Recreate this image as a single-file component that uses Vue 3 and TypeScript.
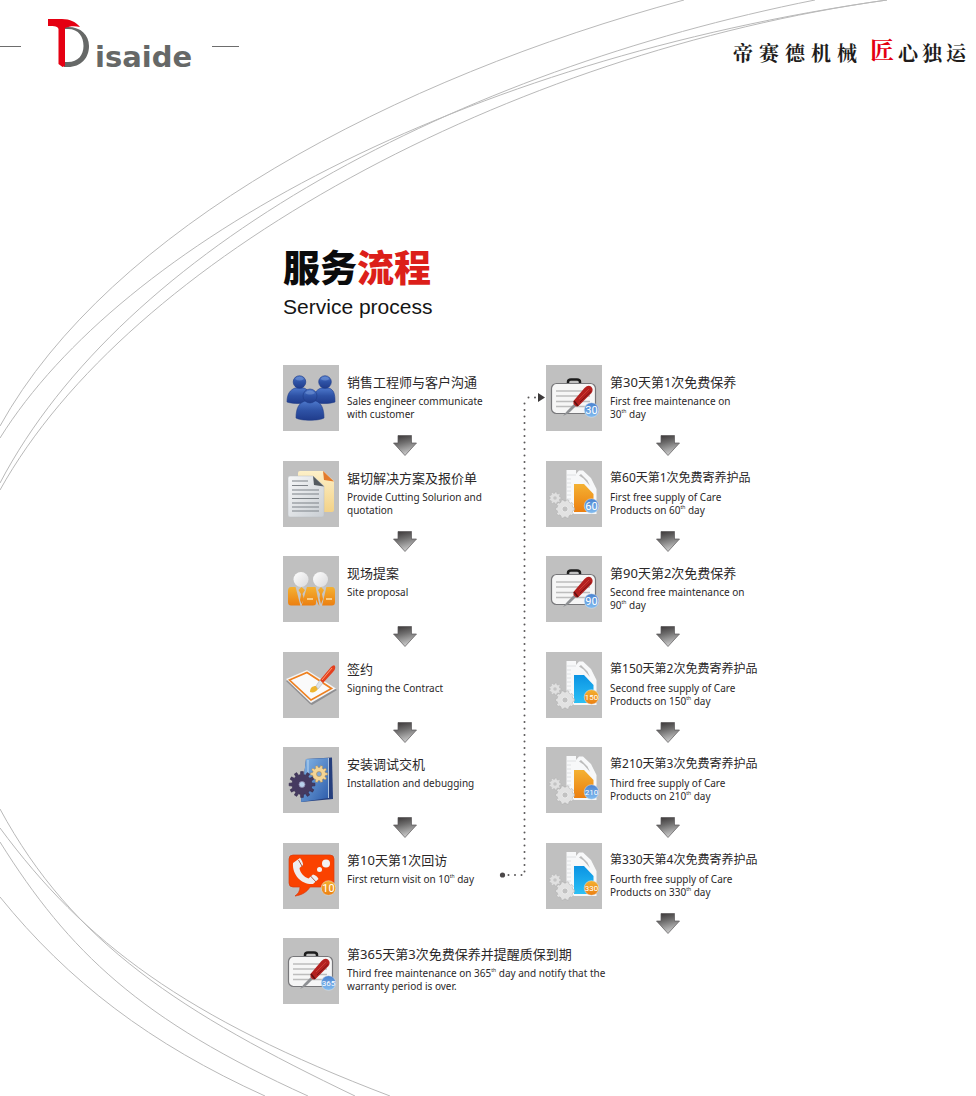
<script setup lang="ts">
type Icon = 'people' | 'papers' | 'team' | 'contract' | 'manual' | 'call' | 'case' | 'bottle'

interface Step {
  icon: Icon
  title: string
  // Each line is [text before the ordinal suffix, text after it]
  lines: [string, string?][]
  badge?: string
  tone?: 'blue' | 'orange'
  liquid?: 'orange' | 'cyan'
  compact?: boolean
}

const first: Step[] = [
  { icon: 'people', title: '销售工程师与客户沟通', lines: [['Sales engineer communicate'], ['with customer']] },
  { icon: 'papers', title: '锯切解决方案及报价单', lines: [['Provide Cutting Solurion and'], ['quotation']] },
  { icon: 'team', title: '现场提案', lines: [['Site proposal']] },
  { icon: 'contract', title: '签约', lines: [['Signing the Contract']] },
  { icon: 'manual', title: '安装调试交机', lines: [['Installation and debugging']] },
  { icon: 'call', title: '第10天第1次回访', lines: [['First return visit on 10', ' day']], badge: '10', tone: 'orange' },
]

const second: Step[] = [
  { icon: 'case', title: '第30天第1次免费保养', lines: [['First free maintenance on'], ['30', ' day']], badge: '30', tone: 'blue' },
  { icon: 'bottle', title: '第60天第1次免费寄养护品', lines: [['First free supply of Care'], ['Products on 60', ' day']], badge: '60', tone: 'blue', liquid: 'orange', compact: true },
  { icon: 'case', title: '第90天第2次免费保养', lines: [['Second free maintenance on'], ['90', ' day']], badge: '90', tone: 'blue' },
  { icon: 'bottle', title: '第150天第2次免费寄养护品', lines: [['Second free supply of Care'], ['Products on 150', ' day']], badge: '150', tone: 'orange', liquid: 'cyan', compact: true },
  { icon: 'bottle', title: '第210天第3次免费寄养护品', lines: [['Third free supply of Care'], ['Products on 210', ' day']], badge: '210', tone: 'blue', liquid: 'orange', compact: true },
  { icon: 'bottle', title: '第330天第4次免费寄养护品', lines: [['Fourth free supply of Care'], ['Products on 330', ' day']], badge: '330', tone: 'orange', liquid: 'cyan', compact: true },
]

const last: Step[] = [
  { icon: 'case', title: '第365天第3次免费保养并提醒质保到期', lines: [['Third free maintenance on 365', ' day and notify that the'], ['warranty period is over.']], badge: '365', tone: 'blue' },
]

const groups = [
  { name: 'first', steps: first },
  { name: 'second', steps: second },
  { name: 'last', steps: last },
]

// Sweeping background lines: upper set, then lower set
const arcs = [
  'M684 0C395 78 110 228 0 426',
  'M815 0C458 71 124 247 0 483',
  'M887 0C462 60 122 243 0 438',
  'M887 0C509 53 129 258 0 490',
  'M0 809C73 944 182 1013 355 1096',
  'M0 828C85 943 185 1018 390 1096',
  'M0 842C69 952 140 1020 308 1096',
  'M0 897C68 981 150 1044 265 1096',
]

function gear(cx: number, cy: number, outer: number, inner: number, teeth: number): string {
  const pts: string[] = []
  const step = (Math.PI * 2) / teeth
  for (let i = 0; i < teeth; i++) {
    const a = i * step
    const spots: [number, number][] = [[-0.3, inner], [-0.2, outer], [0.2, outer], [0.3, inner]]
    for (const [f, r] of spots) {
      pts.push(`${(cx + Math.cos(a + f * step) * r).toFixed(2)} ${(cy + Math.sin(a + f * step) * r).toFixed(2)}`)
    }
  }
  return `M${pts.join('L')}Z`
}

const slogan = [...'帝赛德机械']
const sloganEnd = [...'心独运']
</script>

<template>
  <div class="page">
    <svg class="arcs" width="976" height="1096" viewBox="0 0 976 1096" aria-hidden="true">
      <defs>
        <linearGradient id="g-arrow" x1="0" y1="0" x2="0.3" y2="1"><stop offset="0" stop-color="#353132" /><stop offset="0.45" stop-color="#6f6e6e" /><stop offset="1" stop-color="#c6c6c6" /></linearGradient>
        <linearGradient id="g-person" x1="0" y1="0" x2="0" y2="1"><stop offset="0" stop-color="#4d78cc" /><stop offset="0.5" stop-color="#2e52a5" /><stop offset="1" stop-color="#203c8c" /></linearGradient>
        <linearGradient id="g-orange" x1="0" y1="0" x2="0" y2="1"><stop offset="0" stop-color="#f4b132" /><stop offset="1" stop-color="#ec7f10" /></linearGradient>
        <linearGradient id="g-cyan" x1="0" y1="0" x2="0" y2="1"><stop offset="0" stop-color="#0a93e3" /><stop offset="1" stop-color="#2cc0f5" /></linearGradient>
        <linearGradient id="g-blue" x1="0" y1="0" x2="0" y2="1"><stop offset="0" stop-color="#4a82d0" /><stop offset="1" stop-color="#83bdf0" /></linearGradient>
        <linearGradient id="g-book" x1="0" y1="0" x2="1" y2="1"><stop offset="0" stop-color="#86b8e8" /><stop offset="1" stop-color="#2d5cab" /></linearGradient>
        <linearGradient id="g-paper" x1="0" y1="0" x2="1" y2="1"><stop offset="0" stop-color="#f6f7f8" /><stop offset="1" stop-color="#c9ced3" /></linearGradient>
        <linearGradient id="g-cream" x1="0" y1="0" x2="0" y2="1"><stop offset="0" stop-color="#fdf0c8" /><stop offset="1" stop-color="#f3d287" /></linearGradient>
        <linearGradient id="g-white" x1="0" y1="0" x2="1" y2="1"><stop offset="0" stop-color="#ffffff" /><stop offset="1" stop-color="#d9d9db" /></linearGradient>
      </defs>
      <path v-for="(d, i) in arcs" :key="i" :d="d" fill="none" stroke="#b9b9b9" stroke-width="1" />
    </svg>

    <header class="header">
      <div class="brand">
        <span class="dash dash-left"></span>
        <div class="logo">
          <svg width="41" height="48" viewBox="0 0 41 48" aria-hidden="true">
            <path d="M16 8H20C33 8 41 16 41 27C41 39 33 48 20 48H16V43H20C30 43 35.500 36 35.500 27C35.500 18 31 10 20 10H16Z" fill="#666867" />
            <path d="M0 0H14C22 0 28 3 32 8C27 7 22 7 17 9V47L14.500 48L10.500 45V10C10 7.500 7 7 0 7Z" fill="#e50012" />
          </svg>
          <span class="logo-text">isaide</span>
        </div>
        <span class="dash"></span>
      </div>
      <p class="slogan">
        <span class="slogan-part"><span v-for="c in slogan" :key="c">{{ c }}</span></span>
        <span class="slogan-part tight"><em>匠</em><span v-for="c in sloganEnd" :key="c">{{ c }}</span></span>
      </p>
    </header>

    <main class="content">
      <h1>服务<span>流程</span></h1>
      <p class="subtitle">Service process</p>

      <div class="flow">
        <ol v-for="group in groups" :key="group.name" :class="group.name">
          <li v-for="step in group.steps" :key="step.title">
            <div class="step">
              <svg class="tile" width="56" height="66" viewBox="0 0 56 66" aria-hidden="true">
                <g v-if="step.icon === 'people'" fill="url(#g-person)" stroke="#1f3b86" stroke-width="0.6">
                  <path d="M4 37C4 29 7 25 12 23H21C26 25 28 29 28 37C22 39 10 39 4 37Z" />
                  <circle cx="16.500" cy="17" r="6.300" />
                  <path d="M30 37C30 29 33 25 38 23H46C51 25 52 29 52 37C46 39 36 39 30 37Z" />
                  <circle cx="42" cy="17" r="6.300" />
                  <path d="M13 53C13 43 16 38 22 36H33C38 38 41 43 41 53C36 56 18 56 13 53Z" />
                  <circle cx="27" cy="31" r="7" />
                  <path d="M12 14C14 11 19 11 21 14C18 16 15 16 12 14ZM37.500 14C39.500 11 44.500 11 46.500 14C43.500 16 40.500 16 37.500 14ZM22 28C24 24.500 30 24.500 32 28C29 30 25 30 22 28Z" fill="#8eaee6" stroke="none" opacity="0.4" />
                </g>

                <g v-else-if="step.icon === 'papers'">
                  <path d="M17 10H40L51 20V49Q51 51 49 51H17Q15 51 15 49V12Q15 10 17 10Z" fill="url(#g-cream)" />
                  <path d="M40 10L51 20.500L41 19Z" fill="#e27a2b" />
                  <path d="M7 15H30L41 25V54Q41 56 39 56H7Q5 56 5 54V17Q5 15 7 15Z" fill="url(#g-paper)" stroke="#b9bec2" stroke-width="0.5" />
                  <path d="M30 15L41 25.500L31 24Z" fill="#555b60" />
                  <path d="M9 20H25M9 24.500H25M9 29H36M9 33H36M9 37.500H36M9 42H36M9 46H36M9 50H36" stroke="#7d8287" stroke-width="1.200" fill="none" />
                </g>

                <g v-else-if="step.icon === 'team'">
                  <path d="M8 31H14L18.500 49L23 31H30Q33 31 33 36V47Q33 49.500 30 49.500H8Q5 49.500 5 46V35Q5 31 8 31Z" fill="url(#g-orange)" />
                  <path d="M12.500 30.500H24L18.500 50H17.500Z" fill="#c6c6c6" />
                  <path d="M27 31L36 49.500H49Q52 49.500 52 46V35Q52 31 49 31H42L38 49L34 31Z" fill="url(#g-orange)" />
                  <path d="M32.500 30.500H43.500L39 50H36.500Z" fill="#c6c6c6" />
                  <path d="M15.500 34L18.500 31L22 34L19.500 38L21 43L18.500 48L17 44L18 38ZM35 34L38 31L41 34L39 38L40 43L38 48L36.500 42L37 38Z" fill="url(#g-orange)" />
                  <path d="M24 43H30M43 43H49" stroke="#ffe0a6" stroke-width="1.500" />
                  <circle cx="18" cy="23.500" r="7.500" fill="url(#g-white)" />
                  <circle cx="37.500" cy="23.500" r="7.500" fill="url(#g-white)" />
                </g>

                <g v-else-if="step.icon === 'contract'">
                  <path d="M3 29L24 20L54 38L29 53L27 52Z" fill="#8f8f92" />
                  <path d="M3 27L24 18L53 36.500L28 51Z" fill="#f4f4f4" />
                  <path d="M6.500 28L24 20.500L48.500 36.500L28 48Z" fill="#fafafa" stroke="#ee8020" stroke-width="1.700" />
                  <path d="M27 40C27 36 29 34 33 34L35 37C33 40 30 41 27 40Z" fill="#eeb52f" />
                  <path d="M33 34L37 28L40 31L35 37Z" fill="#dfe3e8" stroke="#a9adb2" stroke-width="0.500" />
                  <path d="M37 28L48 15Q51 12 52 14Q53 17 50 20L40 31Z" fill="#e4401f" />
                  <path d="M39 28L49 16" stroke="#ff9a70" stroke-width="1" />
                </g>

                <g v-else-if="step.icon === 'manual'">
                  <path d="M23 12L49 10.500L50 52L18 55Z" fill="#263f7d" />
                  <path d="M23 12L45 11V51L18 55Z" fill="url(#g-book)" />
                  <path d="M25 13V44M45.500 11V51" stroke="#d2e4f6" stroke-width="0.800" />
                  <path :d="gear(36, 27, 8.500, 6.500, 10)" fill="#f4d595" stroke="#b98f4c" stroke-width="0.500" />
                  <circle cx="36" cy="27" r="2.500" fill="#7ea9da" stroke="#b98f4c" stroke-width="0.600" />
                  <path :d="gear(19, 37.500, 13, 10, 12)" fill="#453a60" stroke="#2e2547" stroke-width="0.500" />
                  <circle cx="19" cy="37.500" r="3" fill="#b9d3ed" stroke="#8d84a8" stroke-width="0.800" />
                </g>

                <g v-else-if="step.icon === 'call'">
                  <path d="M10 12H47Q51 12 51 16V40Q51 44 47 44H27C24 49 19 52 12 53C15 51 17 48 17 44H10Q6 44 6 40V16Q6 12 10 12Z" fill="#fa4200" stroke="#d93a0c" stroke-width="0.700" />
                  <path d="M10 20L17 15C19 17 20 20 20 22L16.500 25C17 30 21 34 25.500 35.500L30 31.500C33 32 34.500 34 35.500 36L30 41C20 42 9 33 10 20Z" fill="#ededef" />
                  <path d="M15.500 17L19.500 24M27.500 33L33 39" stroke="#a95a45" stroke-width="1" />
                  <circle cx="43" cy="20.500" r="4" fill="#f3f3f3" />
                  <circle cx="36.500" cy="26.500" r="2.500" fill="#f3f3f3" />
                </g>

                <g v-else-if="step.icon === 'case'">
                  <path d="M22 18V17Q22 14.500 25 14.500H31Q34 14.500 34 17V18" fill="none" stroke="#1c1c1c" stroke-width="2.500" />
                  <rect x="5.500" y="18.500" width="44" height="30" rx="5" fill="#f6f6f6" stroke="#77777a" stroke-width="1.200" />
                  <path d="M10 26H40M10 31H44M10 36.500H44M10 41.500H44" stroke="#bdbdbd" stroke-width="1.300" />
                  <path d="M30 37L21 46L17 51L21 49L24 47L32 39Z" fill="#8e9093" />
                  <path d="M27.500 36L30 33L38.500 23Q42 19.500 45 21.500Q48 24.500 45.500 28L35.500 38L32.500 41L30 41.500L27.500 39Z" fill="#b3201f" />
                  <path d="M33 34L43 24" stroke="#c93c35" stroke-width="1" />
                  <path d="M34 37L45 26.500" stroke="#7b1213" stroke-width="1" />
                  <path d="M28 36L32 41" stroke="#5e1011" stroke-width="1.500" />
                </g>

                <g v-else>
                  <path d="M20.500 9H30V13L33 9.500H37L45 17L50.500 28V53H20.500Z" fill="#f7f8f9" />
                  <path d="M33 14.500L35 13L41.500 19.500L44 25L37.500 17.500Z" fill="#bcbcbc" />
                  <path d="M20.500 14H30M21 18H25M21 22H25M21 26H25M21 30H25M21 34H25M21 38H25" stroke="#d9dbde" stroke-width="0.800" />
                  <path d="M28 23H38L47.500 33V51H28Z" :fill="`url(#g-${step.liquid})`" />
                  <path :d="gear(9, 37, 6, 4.800, 9)" fill="#e0e0e0" stroke="#b1b1b1" stroke-width="0.400" />
                  <circle cx="9" cy="37" r="1.800" fill="#c4c4c4" />
                  <path :d="gear(19, 48, 9.500, 8, 10)" fill="#e2e2e2" stroke="#adadad" stroke-width="0.500" />
                  <circle cx="19" cy="48" r="3" fill="#c2c2c2" stroke="#f2f2f2" stroke-width="0.700" />
                </g>

                <g v-if="step.badge">
                  <circle cx="45.500" cy="45" r="7.300" :fill="`url(#g-${step.tone})`" stroke="#dfe6ee" stroke-width="0.500" />
                  <text :class="['badge', { small: step.badge.length > 2 }]" x="45.500" :y="step.badge.length > 2 ? 48 : 49" text-anchor="middle">{{ step.badge }}</text>
                </g>
              </svg>
              <div class="text">
                <h2 :class="{ compact: step.compact }">{{ step.title }}</h2>
                <p>
                  <span v-for="(line, i) in step.lines" :key="i" class="line">{{ line[0] }}<template v-if="line[1]"><sup>th</sup>{{ line[1] }}</template></span>
                </p>
              </div>
            </div>
            <svg class="arrow" width="24" height="21" viewBox="0 0 24 21" aria-hidden="true">
              <path d="M5 0.500H18.500V8H23.500L12 20.500L0.500 8H5Z" fill="url(#g-arrow)" stroke="#5a5859" stroke-width="0.700" />
            </svg>
          </li>
        </ol>

        <svg class="link" width="47" height="488" viewBox="0 0 47 488" aria-hidden="true">
          <circle cx="3.500" cy="483" r="2.600" fill="#4b4849" />
          <path d="M9.500 483H24" class="dots" />
          <path d="M25.500 479.500V8" class="dots" />
          <path d="M29.500 5.500H37" class="dots" />
          <path d="M39 1L46 5.500L39 10Z" fill="#3c393a" />
        </svg>
      </div>
    </main>
  </div>
</template>

<style>
body {
  margin: 0;
  background: #ffffff;
}
</style>

<style scoped>
.page {
  position: relative;
  min-height: 100vh;
  overflow: hidden;
  color: #2b2829;
  font-family: "Noto Sans", "Noto Sans CJK SC", sans-serif;
}

.arcs {
  position: absolute;
  top: 0;
  left: 0;
}

.header {
  position: relative;
  display: flex;
  justify-content: space-between;
  align-items: flex-start;
  padding: 19px 10px 0 0;
}

.brand {
  display: flex;
  align-items: flex-start;
  gap: 20px;
}

.dash {
  width: 27px;
  height: 1px;
  margin-top: 27px;
  background: #6d6d6d;
}

.dash-left {
  width: 21px;
  margin-right: 7px;
}

.logo {
  display: flex;
  align-items: baseline;
  gap: 6px;
}

.logo-text {
  color: #666867;
  font-family: "DejaVu Sans", sans-serif;
  font-size: 29px;
  font-weight: 700;
  line-height: 34px;
}

.slogan {
  display: flex;
  align-items: flex-end;
  gap: 13px;
  margin: 16px 0 0;
  color: #211c1b;
  font-family: "Noto Serif CJK SC", "Noto Sans CJK SC", serif;
  font-size: 20px;
  font-weight: 700;
  line-height: 20px;
}

.slogan-part {
  display: flex;
  align-items: flex-end;
  gap: 6px;
}

.slogan-part.tight {
  gap: 4px;
}

.slogan em {
  color: #e50012;
  font-size: 24px;
  font-style: normal;
  line-height: 28px;
}

.content {
  position: relative;
  padding: 170px 0 0 29%;
}

h1 {
  margin: 0;
  color: #0b0b0c;
  font-family: "Noto Sans CJK SC", sans-serif;
  font-size: 37px;
  font-weight: 900;
  line-height: 44px;
}

h1 span {
  color: #dc1f1a;
}

.subtitle {
  margin: 5px 0 0;
  color: #151515;
  font-family: "Liberation Sans", sans-serif;
  font-size: 21px;
  line-height: 28px;
}

.flow {
  position: relative;
  display: grid;
  grid-template-columns: 263px 1fr;
  margin-top: 44px;
}

ol {
  display: grid;
  grid-template-rows: repeat(6, 1fr);
  min-height: 573px;
  margin: 0;
  padding: 0;
  list-style: none;
}

ol.last {
  grid-column: 1 / -1;
  display: block;
  min-height: 0;
}

.step {
  display: flex;
  gap: 8px;
}

.tile {
  flex: none;
  background: #c0c0c0;
}

.text {
  padding-top: 7px;
  white-space: nowrap;
}

.last .text {
  padding-top: 6px;
}

h2 {
  margin: 0 0 3px;
  font-size: 13px;
  font-weight: 400;
  line-height: 20px;
}

h2.compact {
  font-size: 12px;
}

.text p {
  margin: 0;
  font-family: "Noto Sans", sans-serif;
  font-size: 10px;
  line-height: 13px;
}

.line {
  display: block;
}

sup {
  font-size: 5px;
  line-height: 0;
  vertical-align: 5px;
}

.arrow {
  display: block;
  margin: 4px 0 0 110px;
}

.first li:last-child .arrow,
.last .arrow {
  display: none;
}

.link {
  position: absolute;
  top: 27px;
  left: 216px;
}

.dots {
  fill: none;
  stroke: #5a5859;
  stroke-width: 2;
  stroke-linecap: round;
  stroke-dasharray: 0 6.5;
}

.badge {
  fill: #ffffff;
  font-family: Roboto, sans-serif;
  font-size: 11px;
}

.badge.small {
  font-size: 8px;
}
</style>
